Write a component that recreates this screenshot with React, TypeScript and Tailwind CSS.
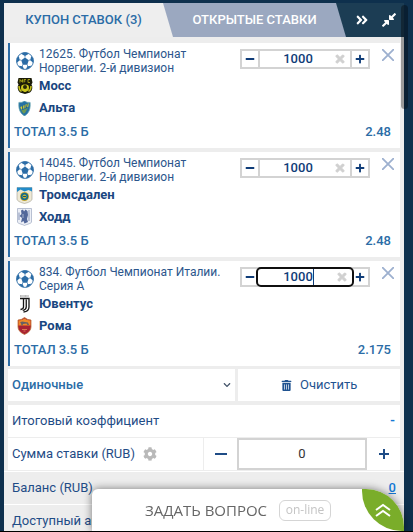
import { useState } from "react";
import type { ReactNode } from "react";
import clsx from "clsx";
import {
  FaAngleDoubleRight,
  FaChevronDown,
  FaCog,
  FaCompressAlt,
  FaMinus,
  FaPlus,
  FaTimes,
  FaTrashAlt,
} from "react-icons/fa";

interface Team {
  name: string;
  crest: ReactNode;
}

interface Bet {
  id: string;
  league: string;
  teams: Team[];
  market: string;
  odds: string;
}

function Ball() {
  return (
    <svg viewBox="0 0 36 36" className="h-[18px] w-[18px]" aria-hidden="true">
      <circle cx="18" cy="18" r="16.8" fill="#fff" stroke="#2b6ca6" strokeWidth="1.8" />
      <g fill="#2b6ca6">
        <path d="M18 11l7.5 5.500-3 8.800h-9L10.500 16.500z" />
        <path d="M10 3.500l8 4.500 8-4.500L21 1h-6z" />
        <path d="M1 22l6.500-5.500L5.500 8 1.500 13z" />
        <path d="M35 22l-6.500-5.500L30.500 8l4 5z" />
        <path d="M5 27.500l8.500 1 2.500 6.500-6-2z" />
        <path d="M31 27.500l-8.500 1-2.500 6.500 6-2z" />
      </g>
      <path
        d="M18 11V7M25.500 16.500l4-1M22.500 25l1 4M13.500 25l-1 4M10.500 16.500l-4-1"
        fill="none"
        stroke="#2b6ca6"
        strokeWidth="1.400"
      />
    </svg>
  );
}

function MossCrest() {
  return (
    <svg viewBox="0 0 32 32" className="h-4 w-4" aria-hidden="true">
      <path d="M3 0h26l2 9-2 4c3 4 2 12-3 16l-10 3-10-3C1 25 0 17 3 13l-2-4z" fill="#1b1b08" />
      <path d="M6 9V3l3 4 2-4v6M14 9V3h4M14 6h3M26 3h-4v6h4" fill="none" stroke="#b9b51b" strokeWidth="1.600" />
      <circle cx="16" cy="20" r="8" fill="#c9c51c" />
      <circle cx="16" cy="18" r="4" fill="#25250a" />
      <path d="M4 16c0 6 2 9 5 11M28 16c0 6-2 9-5 11" fill="none" stroke="#c2be1c" strokeWidth="3" />
      <path d="M10 13l3-1h6l3 1M10 26l4 3h4l4-3" fill="none" stroke="#1b1b08" strokeWidth="2" />
    </svg>
  );
}

function AltaCrest() {
  return (
    <svg viewBox="0 0 32 32" className="h-[15px] w-[15px]" aria-hidden="true">
      <path d="M4 3q6 1 12-3 6 4 12 3c1 12-1 22-12 29C5 25 3 15 4 3z" fill="#2571a4" stroke="#68a7b1" strokeWidth="1.500" />
      <path d="M7 13l18-8-1 7-15 6z" fill="#d2ce35" />
      <path d="M9 20l14-5-5 9-4 3z" fill="#6c9a55" />
      <path d="M12 10v8M17 8v8M22 6l-2 9" stroke="#1d5b85" strokeWidth="2" />
    </svg>
  );
}

function TromsdalenCrest() {
  return (
    <svg viewBox="0 0 32 34" className="h-[17px] w-[17px]" aria-hidden="true">
      <path d="M1 1h30v23c0 4-7 7-15 9C8 31 1 28 1 24z" fill="#eee9d5" stroke="#8d8b80" />
      <path d="M1 1h30v8l-7-3-8 3-8-4-7 5z" fill="#228bc9" />
      <circle cx="16" cy="19" r="9" fill="#d3ad28" />
      <circle cx="16" cy="19" r="7.500" fill="#176b8a" />
      <circle cx="16" cy="19" r="4" fill="#c8b62f" />
      <path d="M13 19h6" stroke="#155674" strokeWidth="2" />
    </svg>
  );
}

function HoddCrest() {
  return (
    <svg viewBox="0 0 30 36" className="h-[18px] w-[15px]" aria-hidden="true">
      <path d="M1 1h28v27c0 3-8 4-14 7C9 32 1 31 1 28z" fill="#eceff6" stroke="#a3adc4" strokeWidth="1.500" />
      <path d="M8 5l4-2 2 4 3-4 4 3 1 8-2 8 2 6-7 3-2-5-5 3 2-9-5-4 4-4z" fill="#52679a" />
      <path d="M24 4v22M4 9v15" stroke="#8795b9" strokeWidth="2" fill="none" />
      <path d="M12 12v8" stroke="#dce2f0" strokeWidth="1.300" />
    </svg>
  );
}

function JuventusCrest() {
  return (
    <svg viewBox="0 0 22 36" className="h-[18px] w-[11px]" aria-hidden="true">
      <path d="M2 2h18" stroke="#777" strokeWidth="2" strokeDasharray="2 0.500" />
      <path d="M2 7h7v17q0 4-6 5M9 7h11v17q0 9-11 10M14.500 9v15q0 5-7 7" fill="none" stroke="#151515" strokeWidth="2.600" />
    </svg>
  );
}

function RomaCrest() {
  return (
    <svg viewBox="0 0 30 36" className="h-[18px] w-[15px]" aria-hidden="true">
      <path d="M2 6q7 0 13-5 6 5 13 5v14q0 9-13 15Q2 29 2 20z" fill="#a92233" stroke="#bb6c31" strokeWidth="1.500" />
      <path d="M3 7q7 0 12-4 5 4 12 4v10H3z" fill="#ef8a28" />
      <path d="M6 11l4-2 12 2 2 5h-3l-2-3-7 1-1 3H9l-1-4z" fill="#656064" />
      <path d="M10 25h10M13 28h4" stroke="#db7650" strokeWidth="2" />
    </svg>
  );
}

const bets: Bet[] = [
  {
    id: "12625",
    league: "12625. Футбол Чемпионат Норвегии. 2-й дивизион",
    teams: [
      { name: "Мосс", crest: <MossCrest /> },
      { name: "Альта", crest: <AltaCrest /> },
    ],
    market: "ТОТАЛ 3.5 Б",
    odds: "2.48",
  },
  {
    id: "14045",
    league: "14045. Футбол Чемпионат Норвегии. 2-й дивизион",
    teams: [
      { name: "Тромсдален", crest: <TromsdalenCrest /> },
      { name: "Ходд", crest: <HoddCrest /> },
    ],
    market: "ТОТАЛ 3.5 Б",
    odds: "2.48",
  },
  {
    id: "834",
    league: "834. Футбол Чемпионат Италии. Серия А",
    teams: [
      { name: "Ювентус", crest: <JuventusCrest /> },
      { name: "Рома", crest: <RomaCrest /> },
    ],
    market: "ТОТАЛ 3.5 Б",
    odds: "2.175",
  },
];

interface StakeProps {
  label: string;
  active: boolean;
  onFocus: () => void;
}

function StakeInput({ label, active, onFocus }: StakeProps) {
  const [stake, setStake] = useState("1000");
  const change = (step: number) => setStake(String(Math.max(0, Number(stake) + step)));

  return (
    <div className="flex h-5 w-[130px] border-2 border-[#d3d3d3]">
      <button aria-label="Уменьшить" onClick={() => change(-100)} className="flex w-4 items-center justify-center text-[#0f3c78]">
        <FaMinus className="h-2.5 w-2.5" />
      </button>
      <div
        className={clsx(
          "relative flex flex-1 items-center",
          active ? "rounded-[3px] bg-white outline-2 outline-[#101010]" : "border-x-2 border-[#d3d3d3]"
        )}
      >
        <input
          aria-label={label}
          value={stake}
          onChange={(e) => setStake(e.target.value)}
          onFocus={onFocus}
          className="w-full min-w-0 pr-3.5 text-center text-[13px] leading-4 font-medium text-[#0f3c78] outline-none"
        />
        {active && <span className="absolute top-0 left-[55px] h-4 w-px bg-[#0f3c78]" />}
        <button aria-label="Стереть" onClick={() => setStake("")} className="absolute right-1 text-[#d0d0d0]">
          <FaTimes className="h-3 w-3" stroke="currentColor" strokeWidth="40" />
        </button>
      </div>
      <button aria-label="Увеличить" onClick={() => change(100)} className="flex w-4 items-center justify-center text-[#0f3c78]">
        <FaPlus className="h-2.5 w-2.5" />
      </button>
    </div>
  );
}

interface BetCardProps {
  bet: Bet;
  active: boolean;
  onFocus: () => void;
  onRemove: () => void;
}

function BetCard({ bet, active, onFocus, onRemove }: BetCardProps) {
  return (
    <article className="border-l-2 border-[#2b6ca6] bg-white pt-1 pr-1.5 pb-1">
      <div className="flex items-start">
        <div className="flex flex-1 items-center">
          <div className="flex w-[29px] shrink-0 justify-center">
            <Ball />
          </div>
          <p className="max-w-[184px] flex-1 text-xs leading-[14px] text-[#2c568c]">{bet.league}</p>
        </div>
        <div className="flex shrink-0 items-start gap-3 pt-0.5">
          <StakeInput label={`Сумма ставки ${bet.id}`} active={active} onFocus={onFocus} />
          <button aria-label="Удалить ставку" onClick={onRemove} className="text-[#9db0cf]">
            <svg viewBox="0 0 12 12" className="h-3 w-3" aria-hidden="true">
              <path d="M0 0l12 12M12 0L0 12" fill="none" stroke="currentColor" strokeWidth="1.800" />
            </svg>
          </button>
        </div>
      </div>
      {bet.teams.map((team) => (
        <div key={team.name} className="flex h-[22px] items-center">
          <div className="flex w-[29px] justify-center">{team.crest}</div>
          <p className="text-[13px] font-bold text-[#194680]">{team.name}</p>
        </div>
      ))}
      <div className="flex h-[25px] items-center justify-between pr-[3px] pl-1 text-[13px] font-medium text-[#2b6ca6]">
        <span>{bet.market}</span>
        <span>{bet.odds}</span>
      </div>
    </article>
  );
}

export default function App() {
  const [items, setItems] = useState(bets);
  const [activeId, setActiveId] = useState("834");
  const [total, setTotal] = useState("0");

  return (
    <div className="h-screen overflow-hidden border-b border-black bg-[#0e304d] pt-[3px] pr-[9px] pl-1 font-['Roboto','Noto_Sans',sans-serif]">
      <main className="min-h-full bg-[#ededed]">
        <nav className="flex h-[34px] bg-[#1c3d54] text-[13px] font-medium">
          <button className="-mr-2.5 w-[169px] bg-[#eeeeee] pr-2.5 text-[#2b6ca6]">
            КУПОН СТАВОК ({items.length})
          </button>
          <button className="flex-1 bg-[#9ba8c0] text-white [clip-path:polygon(0_0,calc(100%-10px)_0,100%_100%,10px_100%)]">
            ОТКРЫТЫЕ СТАВКИ
          </button>
          <div className="flex w-[58px] items-center justify-end gap-3 pr-[7px] text-white">
            <button aria-label="Свернуть">
              <FaAngleDoubleRight className="h-3.5 w-3.5" />
            </button>
            <button aria-label="Уменьшить окно">
              <FaCompressAlt className="h-4 w-4" />
            </button>
          </div>
        </nav>

        <div className="px-1 pt-1.5">
          <div className="flex flex-col gap-1">
            {items.map((bet) => (
              <BetCard
                key={bet.id}
                bet={bet}
                active={bet.id === activeId}
                onFocus={() => setActiveId(bet.id)}
                onRemove={() => setItems(items.filter((b) => b.id !== bet.id))}
              />
            ))}
          </div>

          <div className="mt-[3px] flex h-8 gap-[3px]">
            <div className="relative w-[58%] bg-white">
              <select
                aria-label="Тип ставки"
                className="h-full w-full appearance-none pl-1 text-[13px] font-medium text-[#2b6ca6] outline-none"
              >
                <option>Одиночные</option>
                <option>Экспресс</option>
              </select>
              <FaChevronDown className="pointer-events-none absolute top-3 right-1 h-2 w-2 text-[#45556b]" />
            </div>
            <button
              onClick={() => setItems([])}
              className="flex flex-1 items-center justify-center gap-2 bg-white text-[13px] text-[#1f5390]"
            >
              <FaTrashAlt className="h-[11px] w-[11px]" />
              Очистить
            </button>
          </div>

          <div className="mt-1 flex h-[33px] items-center justify-between border-b border-[#ededed] bg-white pr-[5px] pl-1 text-[13px] text-[#1f4c86]">
            <span>Итоговый коэффициент</span>
            <span className="font-bold text-[#1478d4]">-</span>
          </div>
          <div className="flex h-[33px] items-stretch border-b border-[#ededed] bg-white text-[13px] text-[#1f4c86]">
            <div className="flex w-1/2 items-center gap-2 border-r border-[#ededed] pl-1">
              <label htmlFor="total">Сумма ставки (RUB)</label>
              <FaCog className="h-3.5 w-3.5 text-[#b9b9b9]" />
            </div>
            <button
              aria-label="Меньше"
              onClick={() => setTotal(String(Math.max(0, Number(total) - 100)))}
              className="flex w-[33px] items-center justify-center"
            >
              <svg viewBox="0 0 12 12" className="h-3 w-3" aria-hidden="true">
                <path d="M0 6h12" stroke="currentColor" strokeWidth="2" />
              </svg>
            </button>
            <input
              id="total"
              value={total}
              onChange={(e) => setTotal(e.target.value)}
              className="min-w-0 flex-1 border-2 border-[#d3d3d3] text-center text-[13px] text-[#333333] outline-none"
            />
            <button
              aria-label="Больше"
              onClick={() => setTotal(String(Number(total) + 100))}
              className="flex w-[33px] items-center justify-center"
            >
              <svg viewBox="0 0 10 10" className="h-2.5 w-2.5" aria-hidden="true">
                <path d="M0 5h10M5 0v10" stroke="currentColor" strokeWidth="2" />
              </svg>
            </button>
          </div>
        </div>

        <div className="flex h-[34px] items-center justify-between border-y border-white px-2 text-[13px] text-[#1f4c86]">
          <span>Баланс (RUB)</span>
          <a href="#balance" className="font-medium text-[#1478d4] underline">
            0
          </a>
        </div>
        <div className="flex h-8 items-center px-2 text-[13px] text-[#1f4c86]">Доступный аванс</div>
      </main>

      <div className="fixed top-[5px] right-[5px] h-[104px] w-[7px] rounded-full bg-black/35" />

      <button className="fixed right-[9px] bottom-px left-[92px] flex h-[42px] items-center gap-3 rounded-tl-md rounded-tr-[38px] bg-white pl-[53px] font-['Open_Sans','Noto_Sans',sans-serif] shadow-[0_0_8px_rgba(0,0,0,0.5)]">
        <span className="text-[15px] text-[#666666]">ЗАДАТЬ ВОПРОС</span>
        <span className="flex h-[21px] w-[52px] items-center justify-center rounded-md border border-[#d5d5d5] text-xs text-[#c4c4c4]">
          on-line
        </span>
        <span className="ml-auto flex h-[42px] w-[42px] items-center justify-center rounded-tr-[38px] rounded-bl-[40px] bg-[#7aad2a] text-white">
          <svg viewBox="0 0 16 14" className="h-3.5 w-4" aria-hidden="true">
            <path d="M1 7l7-5 7 5M1 13l7-5 7 5" fill="none" stroke="currentColor" strokeWidth="2" />
          </svg>
        </span>
      </button>
    </div>
  );
}
